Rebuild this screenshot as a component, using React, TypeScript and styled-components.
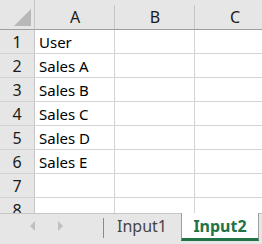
import styled, { createGlobalStyle } from "styled-components";

const columns = ["A", "B", "C"];
const rows = ["User", "Sales A", "Sales B", "Sales C", "Sales D", "Sales E", "", ""];

const GlobalStyle = createGlobalStyle`
  html, body {
    margin: 0;
    padding: 0;
    background: #ffffff;
  }

  body {
    width: 262px;
    height: 244px;
    overflow: hidden;
    font-family: "Noto Sans", "Liberation Sans", sans-serif;
  }
`;

export default function App() {
  return (
    <>
      <GlobalStyle />
      <StyledWorkbook>
        <StyledSheet>
          <StyledRow>
            <StyledCorner>
              <svg width="17" height="17" viewBox="0 0 17 17">
                <polygon points="17,0 17,17 0,17" fill="#b8b8b8" />
              </svg>
            </StyledCorner>
            {columns.map((col) => (
              <StyledColumnHeader key={col}>{col}</StyledColumnHeader>
            ))}
          </StyledRow>
          {rows.map((value, i) => (
            <StyledRow key={i}>
              <StyledRowHeader>{i + 1}</StyledRowHeader>
              <StyledCell>{value}</StyledCell>
              <StyledCell />
              <StyledCell />
            </StyledRow>
          ))}
        </StyledSheet>
        <StyledTabBar>
          <StyledNav>
            <StyledArrow $dir="left" />
            <StyledArrow $dir="right" />
          </StyledNav>
          <StyledDivider />
          <StyledTab>Input1</StyledTab>
          <StyledTab $active>Input2</StyledTab>
        </StyledTabBar>
      </StyledWorkbook>
    </>
  );
}

const StyledWorkbook = styled.div`
  width: 262px;
  height: 244px;
  display: flex;
  flex-direction: column;
  overflow: hidden;
`;

const StyledSheet = styled.div`
  height: 213px;
  overflow: hidden;
  display: flex;
  flex-direction: column;
`;

const StyledRow = styled.div`
  display: flex;
  flex-shrink: 0;
`;

const StyledCorner = styled.div`
  box-sizing: border-box;
  width: 35px;
  height: 30px;
  flex-shrink: 0;
  background: #e6e6e6;
  border-right: 1px solid #c6c6c6;
  border-bottom: 1px solid #9e9e9e;
  display: flex;
  align-items: flex-end;
  justify-content: flex-end;
  padding: 0 3px 3px 0;
`;

const StyledColumnHeader = styled.div`
  position: relative;
  box-sizing: border-box;
  width: 80px;
  height: 30px;
  flex-shrink: 0;
  background: #e6e6e6;
  border-bottom: 1px solid #9e9e9e;
  display: flex;
  align-items: center;
  justify-content: center;
  font-size: 16px;
  color: #1a1a1a;
  padding-top: 5px;

  &::after {
    content: "";
    position: absolute;
    right: 0;
    top: 5px;
    bottom: 0;
    width: 1px;
    background: #c6c6c6;
  }
`;

const StyledRowHeader = styled.div`
  box-sizing: border-box;
  width: 35px;
  height: 24px;
  flex-shrink: 0;
  background: #e6e6e6;
  border-right: 1px solid #c6c6c6;
  border-bottom: 1px solid #d2d2d2;
  display: flex;
  align-items: center;
  justify-content: center;
  font-size: 16px;
  color: #1a1a1a;
`;

const StyledCell = styled.div`
  box-sizing: border-box;
  width: 80px;
  height: 24px;
  flex-shrink: 0;
  border-right: 1px solid #d4d4d4;
  border-bottom: 1px solid #d4d4d4;
  display: flex;
  align-items: center;
  padding-left: 4px;
  font-size: 15px;
  color: #000000;
  white-space: nowrap;
`;

const StyledTabBar = styled.div`
  flex: 1;
  display: flex;
  align-items: stretch;
  background: #e6e6e6;
  border-top: 1px solid #c6c6c6;
`;

const StyledNav = styled.div`
  box-sizing: border-box;
  width: 80px;
  flex-shrink: 0;
  display: flex;
  align-items: center;
  justify-content: center;
  gap: 23px;
  padding-left: 13px;
  padding-bottom: 6px;
`;

const StyledArrow = styled.span<{ $dir: "left" | "right" }>`
  width: 0;
  height: 0;
  border-top: 5px solid transparent;
  border-bottom: 5px solid transparent;
  ${({ $dir }) =>
    $dir === "left"
      ? "border-right: 5px solid #c0c0c0;"
      : "border-left: 5px solid #c0c0c0;"}
`;

const StyledDivider = styled.div`
  width: 1px;
  flex-shrink: 0;
  margin: 4px 0 6px 23px;
  background: #8a8a8a;
`;

const StyledTab = styled.div<{ $active?: boolean }>`
  box-sizing: border-box;
  flex-shrink: 0;
  display: flex;
  align-items: center;
  justify-content: center;
  font-size: 16px;
  height: 28px;
  margin-top: -1px;
  ${({ $active }) =>
    $active
      ? `
    width: 78px;
    background: #ffffff;
    border-left: 1px solid #9e9e9e;
    border-right: 1px solid #9e9e9e;
    border-bottom: 3px solid #217346;
    color: #217346;
    font-weight: 700;
    padding-top: 1px;
  `
      : `
    width: 77px;
    color: #444444;
    padding-right: 1px;
    padding-bottom: 3px;
  `}
`;
